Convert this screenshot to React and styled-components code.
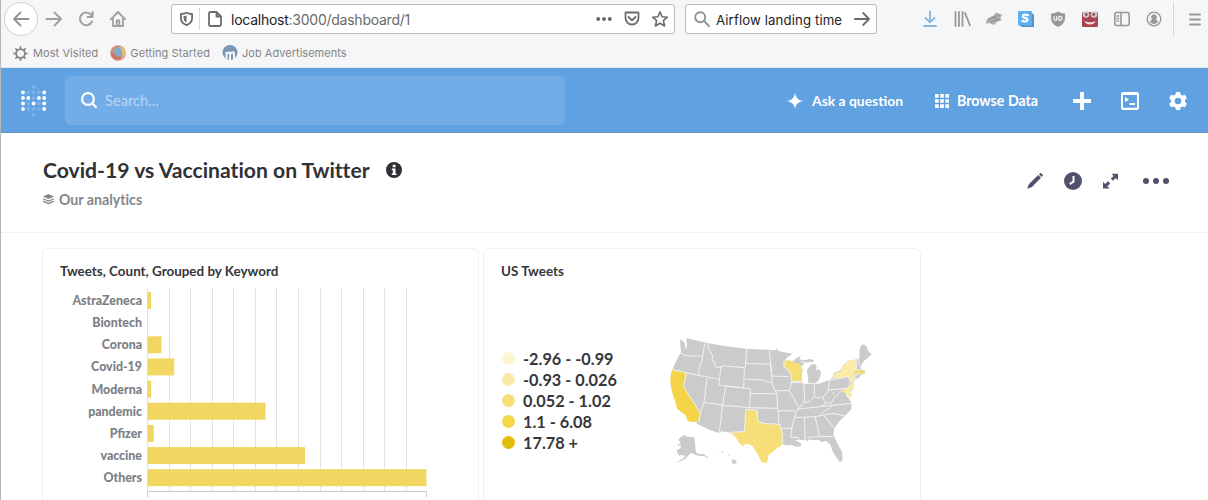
import React from 'react';
import styled, { createGlobalStyle } from 'styled-components';

const Global = createGlobalStyle`
  * { box-sizing: border-box; }
  body { margin: 0; background: #fff; overflow: hidden; }
`;

const Window = styled.div`
  height: 500px;
  overflow: hidden;
  border-left: 1px solid #b4b6b9;
  background: #fff;
  font-family: Lato, 'Liberation Sans', sans-serif;
`;

const Icon = styled.svg.attrs((p) => ({
  width: p.$w || 16,
  height: p.$h || p.$w || 16,
  viewBox: p.viewBox || '0 0 16 16',
}))`
  display: block;
  flex: none;
  overflow: visible;
  fill: ${(p) => (p.$line ? 'none' : 'currentColor')};
  stroke: ${(p) => (p.$line ? 'currentColor' : 'none')};
  stroke-width: ${(p) => p.$line || 0};
  stroke-linecap: round;
  stroke-linejoin: round;
`;

/* Browser chrome */
const Chrome = styled.div`
  height: 68px;
  background: #f5f6f8;
  border-bottom: 1px solid #e3e6ea;
  font-family: Inter, 'Liberation Sans', sans-serif;
`;
const Toolbar = styled.div`
  display: flex;
  align-items: center;
  height: 38px;
`;
const NavButtons = styled.div`
  display: flex;
  align-items: center;
  width: 170px;
  padding-left: 3px;
  color: #a0a0a1;
`;
const BackButton = styled.div`
  display: grid;
  place-items: center;
  width: 34px;
  height: 34px;
  margin-right: 8px;
  border: 1px solid #cfcfd1;
  border-radius: 50%;
  background: #fff;
  color: #929293;
`;
const NavButton = styled.div`
  display: grid;
  place-items: center;
  width: 32px;
  margin-left: ${(p) => (p.$first ? '-8px' : 0)};
`;
const Field = styled.div`
  display: flex;
  align-items: center;
  width: ${(p) => p.$width}px;
  height: 30px;
  margin-right: ${(p) => p.$after || 0}px;
  padding: 0 ${(p) => p.$padRight}px 0 8px;
  border: 1px solid #b9babc;
  border-radius: 3px;
  background: #fff;
  color: #6c6c6d;
`;
const FieldDivider = styled.span`
  width: 1px;
  height: 22px;
  margin: 0 8px 0 6px;
  background: #d8d8da;
`;
const FieldText = styled.span`
  flex: 1;
  padding-top: 1px;
  margin-left: ${(p) => p.$left}px;
  color: #222;
  font-size: ${(p) => p.$size}px;
  letter-spacing: ${(p) => p.$track || 0}px;
  white-space: nowrap;
`;
const Muted = styled.span`
  color: #69696a;
`;
const FieldIcons = styled.div`
  display: flex;
  align-items: center;
  gap: 12px;
`;
const Extensions = styled.div`
  display: flex;
  align-items: center;
  margin-left: 37px;
  color: #98989a;
`;
const Extension = styled.div`
  display: grid;
  place-items: center;
  width: 32px;
  color: ${(p) => p.$color || 'inherit'};
`;
const ToolbarDivider = styled.span`
  width: 1px;
  height: 34px;
  margin: 0 15px 0 3px;
  background: #d6d6d8;
`;
const Bookmarks = styled.div`
  display: flex;
  align-items: center;
  height: 30px;
  padding-left: 12px;
  color: #858586;
  font-size: 11px;
`;
const Bookmark = styled.div`
  display: flex;
  align-items: center;
  gap: ${(p) => p.$gap || 4}px;
  margin-right: 12px;
  letter-spacing: ${(p) => p.$track || 0}px;
  white-space: nowrap;
`;

/* App navigation */
const AppBar = styled.div`
  display: flex;
  align-items: center;
  height: 65px;
  padding-left: 20px;
  background: #60a1e1;
  border-bottom: 1px solid #6a94bf;
  color: #fff;
`;
const SearchBar = styled.div`
  display: flex;
  align-items: center;
  gap: 8px;
  width: 500px;
  height: 49px;
  margin-left: 18px;
  padding: 0 0 0 16px;
  border-radius: 6px;
  background: #73ade8;
`;
const Placeholder = styled.span`
  color: #b7d6f4;
  font-size: 14.7px;
`;
const AppLinks = styled.div`
  display: flex;
  align-items: center;
  flex: 1;
  padding: 1px 0 0 222px;
`;
const AppLink = styled.div`
  display: flex;
  align-items: center;
  gap: ${(p) => p.$gap}px;
  width: ${(p) => p.$width}px;
  font-size: ${(p) => p.$size}px;
  font-weight: 700;
  white-space: nowrap;
`;
const AppButton = styled.div`
  display: grid;
  place-items: center;
  width: 48px;
`;

/* Dashboard heading */
const Heading = styled.div`
  display: flex;
  justify-content: space-between;
  height: 100px;
  padding: 24px 25px 0 42px;
  border-bottom: 1px solid #f0f0f1;
`;
const Title = styled.h1`
  display: flex;
  align-items: center;
  gap: 16px;
  height: 26px;
  margin: 0;
  color: #303135;
  font-size: 21.15px;
  line-height: 24px;
  font-weight: 700;
  font-variant-ligatures: none;
  white-space: nowrap;
`;
const Collection = styled.div`
  display: flex;
  align-items: center;
  gap: 5px;
  height: 20px;
  margin-top: 6px;
  color: #84878a;
  font-size: 14.2px;
  font-weight: 700;
  font-variant-ligatures: none;
`;
const Actions = styled.div`
  display: flex;
  align-items: center;
  height: 48px;
  color: #50516a;
`;
const Action = styled.div`
  display: grid;
  place-items: center;
  width: ${(p) => p.$width || 38}px;
`;

/* Cards */
const Grid = styled.div`
  display: flex;
  gap: 4px;
  padding: 15px 0 0 41px;
`;
const Card = styled.section`
  width: ${(p) => p.$width}px;
  height: 270px;
  padding-top: 14px;
  border: 1px solid #f0f0f2;
  border-radius: 6px 6px 0 0;
  background: #fff;
`;
const CardTitle = styled.h2`
  height: 18px;
  margin: 0;
  padding-left: 17px;
  color: #35363a;
  font-size: 13.43px;
  line-height: 16px;
  font-weight: 700;
  font-variant-ligatures: none;
`;
const Chart = styled.svg`
  display: block;
  font-family: Lato, sans-serif;
`;
const RowLabel = styled.text`
  fill: #7c8085;
  font-size: 12.4px;
  font-weight: 900;
  text-anchor: end;
`;
const MapBody = styled.div`
  display: flex;
`;
const Legend = styled.ul`
  width: 156px;
  margin: 0;
  padding: 67px 0 0 18px;
  list-style: none;
`;
const LegendItem = styled.li`
  display: flex;
  align-items: center;
  gap: 8px;
  height: 21px;
  color: #37383b;
  font-size: 16.3px;
  font-weight: 700;
  white-space: nowrap;
`;
const Dot = styled.span`
  width: 13px;
  height: 13px;
  border-radius: 50%;
  background: ${(p) => p.$color};
`;
const UsMap = styled.svg`
  display: block;
  margin-top: 39px;
`;

const ROWS = [
  ['AstraZeneca', 3.5],
  ['Biontech', 0],
  ['Corona', 14],
  ['Covid-19', 26.7],
  ['Moderna', 3.7],
  ['pandemic', 118],
  ['Pfizer', 6.3],
  ['vaccine', 157.5],
  ['Others', 279],
];

const BUCKETS = [
  ['-2.96 - -0.99', '#fdf6d3'],
  ['-0.93 - 0.026', '#faeaa6'],
  ['0.052 - 1.02', '#f6de7a'],
  ['1.1 - 6.08', '#f5d648'],
  ['17.78 +', '#e2bd0b'],
];

const LOGO = [
  [2, 0, 0], [0, 1, 1], [1, 1, 0], [2, 1, 0], [3, 1, 0], [4, 1, 1],
  [0, 2, 1], [1, 2, 1], [2, 2, 0], [3, 2, 1], [4, 2, 1],
  [0, 3, 1], [1, 3, 0], [2, 3, 1], [3, 3, 0], [4, 3, 1],
  [0, 4, 1], [1, 4, 0], [2, 4, 0], [3, 4, 0], [4, 4, 1], [2, 5, 0],
];

function BarChart() {
  return (
    <Chart width="430" height="230" viewBox="0 0 430 230">
      {Array.from({ length: 13 }, (_, i) => (
        <rect key={i} x={Math.round(104 + i * 21.57)} y="7" width="1" height="203" fill="#e2e2e3" />
      ))}
      {ROWS.map(([name, width], i) => (
        <g key={name}>
          <RowLabel x="99" y={24 + i * 22.15}>{name}</RowLabel>
          <rect x="104.5" y={11 + i * 22.15} width={width} height="17" fill="#f1d762" />
        </g>
      ))}
      <path d="M104.5 216V210.5H383.5V216" fill="none" stroke="#c9c9ca" />
    </Chart>
  );
}

const BORDERS =
  'M122,98L132,105L155,108L188,108M194,70L188,108L187,120L178,140L175,166' +
  'M97,149L139,158L236,178M203,72L206,88L218,108L216,122L224,125L226,141L243,142' +
  'M313,143L244,137L236,195L311,204ZM320,86L316,143M317,130L392,133' +
  'M314,177L370,180L382,186L396,187M388,91L392,133L395,168L396,187L404,212L411,222L413,265' +
  'M395,168L447,170M404,212L446,212L450,204L455,186M330,220L410,222' +
  'M257,198L331,206L329,263L248,256ZM201,175L192,247L248,255M192,247L186,262L181,280' +
  'M139,158L131,200L181,280L176,308M248,255L238,340M329,263L413,265L415,272' +
  'M318,267L352,271L353,303L370,310L385,312L400,311L422,314M318,267L313,335L270,337' +
  'M415,272L467,273M415,272L417,314L422,324L428,345L428,373M422,324L455,325' +
  'M446,212L460,232L465,243L476,262L468,280L458,310L456,325L452,352L475,352L478,362' +
  'M392,133L395,168M432,122L432,140L446,150L454,170L454,184L488,184M455,188L490,188' +
  'M491,192L494,230L492,248M523,190L523,228M500,190L524,190L540,190M473,267L495,265L560,258L635,250' +
  'M476,265L492,248L508,245L521,231L535,234L548,230L558,222L566,210L568,180' +
  'M548,230L553,243L560,248L573,250L582,234L592,225L602,212M566,210L625,204M560,248L542,260' +
  'M466,293L525,290L550,286L575,280L590,282L615,288M538,287L552,275L566,266L576,257' +
  'M494,293L495,362M525,290L534,325L537,348M500,352L537,350L580,349M550,286L566,303L582,325' +
  'M568,180L625,170L630,184L626,204M648,118L650,135L647,150M657,110L655,125L662,143M643,151L668,148M643,164L662,160' +
  'M643,176L650,163M584,224L575,214M482,126L508,129';

function StatesMap() {
  return (
    <UsMap width="250" height="160" viewBox="0 0 750 480">
      <g fill="#cbcbcc">
        <path d="M120,58L133,67L136,80L132,88L141,80L139,54L205,70L260,79L320,86L408,91L410,84L414,92L432,97L458,101L442,112L434,122L450,123L486,133L482,150L489,143L485,170L486,184L492,194L503,190L540,190L568,180L580,170L580,160L603,150L610,135L625,122L655,117L659,108L658,92L664,76L672,73L679,78L684,92L695,103L684,113L672,122L664,136L663,147L675,154L674,161L664,163L658,173L645,178L641,190L640,206L634,215L626,207L634,222L631,235L621,218L619,228L630,240L635,252L634,268L615,287L597,305L583,325L580,345L592,370L606,395L608,420L600,427L588,410L577,392L572,375L558,362L545,366L535,359L515,361L508,357L503,364L497,360L465,360L482,370L484,378L470,381L455,375L440,376L428,373L400,372L300,350L272,338L245,334L238,340L205,328L172,312L165,300L97,149L104,132L118,105L123,98Z" />
        <path d="M505,189L504,170L500,152L508,140L514,133L526,133L530,142L528,152L537,147L543,158L541,170L534,184L524,190Z" />
        <path d="M456,125L470,114L483,107L478,118L494,121L510,117L522,121L519,126L503,127L492,131L485,139L478,131Z" />
        <path d="M115,360L121,352L134,345L142,350L163,352L168,398L180,403L192,402L203,412L206,417L192,408L181,408L168,405L155,399L148,403L136,417L122,424L107,428L128,416L136,408L126,405L118,407L112,399L110,391L121,385L124,377L111,376L122,368Z" />
        <path d="M102,377L106,379L103,381ZM224,386L229,389L224,389ZM243,394L252,397L246,400ZM265,402L272,405L267,408ZM276,417L287,421L291,427L281,433L276,429Z" />
      </g>
      <path fill="#f4d54a" d="M97,149L139,158L131,200L181,280L174,305L150,306L142,301L137,286L111,266L107,250L96,215L91,190L92,165Z" />
      <path fill="#f6df78" d="M318,269L352,273L353,303L370,311L385,313L400,312L422,317L423,328L429,345L428,373L405,390L386,405L381,430L363,425L355,406L338,379L327,372L315,373L308,379L298,369L286,351L272,338L313,335Z" />
      <path fill="#f5df72" d="M432,124L446,119L454,124L480,132L484,140L480,151L488,146L485,165L485,184L456,184L453,170L446,152L432,142Z" />
      <path fill="#faeba5" d="M577,176L582,170L580,162L603,153L610,136L625,123L648,118L650,138L645,152L642,176L650,173L642,180L641,205L634,214L627,206L634,222L631,236L625,229L617,222L608,214L600,211L625,204L634,190L625,170Z" />
      <path fill="#f3d66a" d="M643,152L655,148L663,148L668,154L676,158L674,162L664,163L656,160L643,163Z" />
      <path fill="#cbcbcc" d="M568,180L625,170L629,176L627,185L631,191L625,204L570,210Z" />
      <path d={BORDERS} fill="none" stroke="#f3f3f3" strokeWidth="3" strokeLinejoin="round" />
    </UsMap>
  );
}

function BrowserChrome() {
  return (
    <Chrome>
      <Toolbar>
        <NavButtons>
          <BackButton><Icon $line={1.8}><path d="M15.500 8H1M7.500 1.500L1 8L7.500 14.500" /></Icon></BackButton>
          <NavButton $first><Icon $line={1.9}><path d="M.5 8H15M8.500 1.500L15 8L8.500 14.500" /></Icon></NavButton>
          <NavButton><Icon $line={2}><path d="M13.600 4.500A6.300 6.300 0 1 0 14 10.500M14.600 1V6H9.600" /></Icon></NavButton>
          <NavButton><Icon $line={1.8}><path d="M.8 8.300L8 1L15.200 8.300M3 7.500V15H13V7.500M6.700 15V9.500H9.300V15" /></Icon></NavButton>
        </NavButtons>
        <Field $width={504} $after={10} $padRight={6}>
          <Icon $w={13} $h={14} $line={1.8} viewBox="0 0 13 14"><path d="M.9 2Q4.500 2 6.500 .8Q8.500 2 12.100 2V6Q12.100 11 6.500 13.200Q.9 11 .9 6Z" /><path fill="currentColor" stroke="none" d="M6.500 3.500V10.600Q3.500 9 3.500 6V4.300Z" /></Icon>
          <FieldDivider />
          <Icon $w={14} $h={16} $line={1.8} viewBox="0 0 14 16"><path d="M2.500 1H8.500L13 5.500V13.500Q13 15 11.500 15H2.500Q1 15 1 13.500V2.500Q1 1 2.500 1ZM8.500 1V5.500H13" /></Icon>
          <FieldText $left={9} $size={14} $track={-0.25}>localhost<Muted>:3000/dashboard/1</Muted></FieldText>
          <FieldIcons>
            <Icon><circle cx="2.200" cy="8" r="2" /><circle cx="8" cy="8" r="2" /><circle cx="13.800" cy="8" r="2" /></Icon>
            <Icon $line={1.8}><path d="M1.500 1.500H14.500V7A6.500 6.500 0 0 1 1.500 7ZM4.500 6L8 9.300L11.500 6" /></Icon>
            <Icon $line={1.6}><path d="M8 .8L10.100 5.700L15.300 6.200L11.400 9.700L12.600 15L8 12.200L3.400 15L4.600 9.700L.7 6.200L5.900 5.700Z" /></Icon>
          </FieldIcons>
        </Field>
        <Field $width={192} $padRight={6}>
          <Icon $line={1.9} color="#939394"><circle cx="6.200" cy="6.200" r="5" /><path d="M10 10L15 15" /></Icon>
          <FieldText $left={6} $size={13.2} $track={0.12}>Airflow landing time</FieldText>
          <Icon $w={16} $line={1.8}><path d="M.8 8H15M9.200 2L15 8L9.200 14" /></Icon>
        </Field>
        <Extensions>
          <Extension $color="#86b8df"><Icon $line={1.9}><path d="M8 .5V11M3.500 7L8 11.300L12.500 7M2 15H14" /></Icon></Extension>
          <Extension><Icon $line={1.8}><path d="M1.500 1V15M5 1V15M8.500 1V15M11 2L16 14.500" /></Icon></Extension>
          <Extension>
            <Icon $w={18} $h={16} viewBox="0 0 18 16">
              <path fill="#b0b0b1" d="M1 11L3 7L8 5L11 1.500L17.500 4L15 7L17 9L12 11L9 14L4 12L1 13Z" />
              <path fill="none" stroke="#8d8d8e" strokeWidth="1" d="M3 9L14 4M5 11L15 8M7 6L12 8" />
            </Icon>
          </Extension>
          <Extension>
            <Icon>
              <path fill="#5b8fc2" d="M14 2L16 4V16H4L1 14Z" />
              <rect width="14" height="14.500" rx="1" fill="#60afee" />
              <path fill="none" stroke="#fff" strokeWidth="2.200" d="M10 4.300Q5 2.800 4.800 5.200Q5 6.800 7.500 7.100Q9.800 7.600 9.500 9.300Q8.500 11.200 4.400 10" />
            </Icon>
          </Extension>
          <Extension>
            <Icon>
              <path d="M1 2.500Q5 2.500 8 .5Q11 2.500 15 2.500V8Q14.500 13 8 16Q1.500 13 1 8Z" />
              <path fill="none" stroke="#f4f4f4" strokeWidth="1.200" d="M4 5.500V8.500Q5 10 6.700 8.700V5.500M8.800 5.500V9.200M8.800 5.500Q12 5 12 7.300Q12 9.500 8.800 9.200" />
            </Icon>
          </Extension>
          <Extension>
            <Icon>
              <rect y="1" width="16" height="15" rx="1.500" fill="#a94351" />
              <circle cx="4" cy="3.500" r="3.300" fill="#d6c5c5" /><circle cx="12" cy="3.500" r="3.300" fill="#d6c5c5" />
              <circle cx="4.300" cy="3.500" r="1.300" fill="#67474a" /><circle cx="11.700" cy="3.500" r="1.300" fill="#67474a" />
              <path fill="#f4dddd" d="M2.500 10Q8 12.500 13.500 10Q12.500 13.300 8 13.500Q3.500 13.300 2.500 10Z" />
            </Icon>
          </Extension>
          <Extension><Icon $line={1.6}><rect x=".8" y="1.500" width="14.400" height="13" rx="2" /><path d="M7 1.500V14.500M3 5H4.500M3 7.500H4.500M3 10H4.500" /></Icon></Extension>
          <Extension><Icon $line={1.3}><circle cx="8" cy="8" r="6.800" /><path fill="currentColor" stroke="none" d="M8 3.300A2.800 2.800 0 0 1 9.700 8.400Q12 9 12 11Q8 15 4 11Q4 9 6.300 8.400A2.800 2.800 0 0 1 8 3.300Z" /></Icon></Extension>
          <ToolbarDivider />
          <Icon $w={12} $h={13} $line={1.8} viewBox="0 0 12 13"><path d="M1 1.500H11M1 6.500H11M1 11.500H11" /></Icon>
        </Extensions>
      </Toolbar>
      <Bookmarks>
        <Bookmark $gap={5} $track={0.08}>
          <Icon $w={15} $line={1.8}><circle cx="8" cy="8" r="4.700" /><path d="M8 1V3M8 13V15M1 8H3M13 8H15M3.100 3.100L4.600 4.600M11.400 11.400L12.900 12.900M3.100 12.900L4.600 11.400M11.400 4.600L12.900 3.100" /></Icon>
          Most Visited
        </Bookmark>
        <Bookmark $track={0.08}>
          <Icon>
            <circle cx="8" cy="8" r="7.800" fill="#df8b6b" />
            <circle cx="8.500" cy="6.800" r="5.300" fill="#86aac8" />
            <path fill="#e8bd79" d="M9 1Q14 2 15.500 7Q15 12 11 14Q13 10 12 6Z" />
            <path fill="#c77769" d="M1 7L5 9L8 12L13 11Q9 16 5 14Q1 12 1 7Z" />
          </Icon>
          Getting Started
        </Bookmark>
        <Bookmark $track={0.03}>
          <Icon>
            <circle cx="8" cy="7.500" r="7.500" fill="#7796b1" />
            <path fill="none" stroke="#f4f6f8" strokeWidth="2" strokeLinecap="butt" d="M4.500 15V7M4.500 9Q8 5.500 8 9V15M8 9Q12 5.500 12 9V15" />
          </Icon>
          Job Advertisements
        </Bookmark>
      </Bookmarks>
    </Chrome>
  );
}

function Navigation() {
  return (
    <AppBar>
      <Icon $w={26} $h={34} viewBox="0 0 26 34">
        {LOGO.map(([x, y, on]) => (
          <circle key={`${x}-${y}`} cx={2 + x * 5.3} cy={4 + y * 5.500} r="1.900" fill={on ? '#fff' : '#7cb1e8'} />
        ))}
      </Icon>
      <SearchBar>
        <Icon $w={16} $line={2.2}><circle cx="7" cy="7" r="5.900" /><path d="M11.500 11.500L15 15.300" /></Icon>
        <Placeholder>Search...</Placeholder>
      </SearchBar>
      <AppLinks>
        <AppLink $gap={9} $width={148} $size={13.9}>
          <Icon><path d="M8 0Q9 7 16 8Q9 9 8 16Q7 9 0 8Q7 7 8 0Z" /></Icon>
          Ask a question
        </AppLink>
        <AppLink $gap={8} $width={123} $size={14.2}>
          <Icon $w={14}><path d="M0 0H4.200V4.200H0ZM5.900 0H10.100V4.200H5.900ZM11.800 0H16V4.200H11.800ZM0 5.900H4.200V10.100H0ZM5.900 5.900H10.100V10.100H5.900ZM11.800 5.900H16V10.100H11.800ZM0 11.800H4.200V16H0ZM5.900 11.800H10.100V16H5.900ZM11.800 11.800H16V16H11.800Z" /></Icon>
          Browse Data
        </AppLink>
        <AppButton><Icon $w={18}><path d="M6.300 0H9.700V6.300H16V9.700H9.700V16H6.300V9.700H0V6.300H6.300Z" /></Icon></AppButton>
        <AppButton><Icon $w={18} viewBox="0 0 18 18"><path fillRule="evenodd" d="M2 0H16Q18 0 18 2V16Q18 18 16 18H2Q0 18 0 16V2Q0 0 2 0ZM2 3V15.800H16V3ZM4 5L8 7.500L4 10ZM8.500 11H14V13H8.500Z" /></Icon></AppButton>
        <AppButton>
          <Icon $w={18} viewBox="0 0 18 18">
            <path fillRule="evenodd" d="M7 0H11L11.600 2.600L13.300 3.600L15.900 2.800L17.900 6.200L16 8V10L17.900 11.800L15.900 15.200L13.300 14.400L11.600 15.400L11 18H7L6.400 15.400L4.700 14.400L2.100 15.200L.1 11.800L2 10V8L.1 6.200L2.100 2.800L4.700 3.600L6.400 2.600ZM9 5.700A3.300 3.300 0 1 0 9 12.300A3.300 3.300 0 1 0 9 5.700Z" />
          </Icon>
        </AppButton>
      </AppLinks>
    </AppBar>
  );
}

export default function App() {
  return (
    <Window>
      <Global />
      <BrowserChrome />
      <Navigation />
      <Heading>
        <div>
          <Title>
            Covid-19 vs Vaccination on Twitter
            <Icon><path fillRule="evenodd" d="M8 0A8 8 0 1 0 8 16A8 8 0 1 0 8 0ZM6.700 2.700H9.500V5.200H6.700ZM5.800 6.500H9.500V11.500H10.500V13H5.800V11.500H6.800V8H5.800Z" /></Icon>
          </Title>
          <Collection>
            <Icon $w={11}><path d="M8 0L16 3.700L8 7.400L0 3.700Z" /><path fill="none" stroke="currentColor" strokeWidth="1.800" d="M.8 7.200L8 10.400L15.200 7.200M.8 10.800L8 14L15.200 10.800" /></Icon>
            Our analytics
          </Collection>
        </div>
        <Actions>
          <Action><Icon><path d="M11.200 2L14 4.800L5 14L.2 15.800L2 11ZM12 1.200L13 .3Q13.800-.2 14.500 .5L15.600 1.600Q16.200 2.400 15.600 3L14.800 3.900Z" /></Icon></Action>
          <Action><Icon $w={18} viewBox="0 0 18 18"><circle cx="9" cy="9" r="9" /><path fill="none" stroke="#fff" strokeWidth="2" strokeLinecap="butt" d="M9.500 4V9.700L5.700 12.200" /></Icon></Action>
          <Action><Icon><path d="M8.500 .8H15V7.200L12.800 5L10 7.800L7.800 5.600L10.700 2.900ZM0 8.700L2.200 10.900L4.900 8.200L7.200 10.500L4.400 13.200L6.600 15.400H0Z" /></Icon></Action>
          <Action $width={53}><Icon $w={27} $h={8} viewBox="0 0 27 8"><circle cx="3" cy="4" r="3" /><circle cx="13" cy="4" r="3" /><circle cx="23" cy="4" r="3" /></Icon></Action>
        </Actions>
      </Heading>
      <Grid>
        <Card $width={437}>
          <CardTitle>Tweets, Count, Grouped by Keyword</CardTitle>
          <BarChart />
        </Card>
        <Card $width={438}>
          <CardTitle>US Tweets</CardTitle>
          <MapBody>
            <Legend>
              {BUCKETS.map(([label, color]) => (
                <LegendItem key={label}><Dot $color={color} />{label}</LegendItem>
              ))}
            </Legend>
            <StatesMap />
          </MapBody>
        </Card>
      </Grid>
    </Window>
  );
}
